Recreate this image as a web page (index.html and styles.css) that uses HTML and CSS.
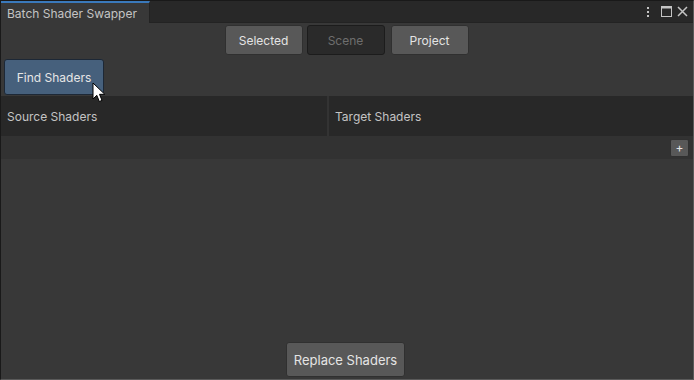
FILE: index.html
```html
<!DOCTYPE html>
<html lang="en">
  <head>
    <meta charset="UTF-8" />
    <title>Batch Shader Swapper</title>
    <link rel="stylesheet" href="styles.css">
  </head>
  <body>
    <div class="window">
      <div class="tabbar">
        <div class="tab">Batch Shader Swapper</div>
        <div class="tabicons">
          <svg class="kebab" width="4" height="12" viewBox="0 0 4 12">
            <rect x="1" y="1" width="2" height="2" fill="#c4c4c4" />
            <rect x="1" y="5" width="2" height="2" fill="#c4c4c4" />
            <rect x="1" y="9" width="2" height="2" fill="#c4c4c4" />
          </svg>
          <svg class="maxi" width="11" height="11" viewBox="0 0 11 11">
            <rect x="0.5" y="0.5" width="10" height="10" fill="none" stroke="#c4c4c4" />
            <rect x="0.5" y="0.5" width="10" height="2" fill="#c4c4c4" />
          </svg>
          <svg width="11" height="11" viewBox="0 0 11 11">
            <path d="M1 1 L10 10 M10 1 L1 10" stroke="#c4c4c4" stroke-width="1.5" />
          </svg>
        </div>
      </div>

      <div class="content">
        <div class="toolbar">
          <button class="Button">Selected</button>
          <button class="Button active">Scene</button>
          <button class="Button gap">Project</button>
        </div>

        <div class="findrow">
          <button class="Button blue">Find Shaders</button>
          <svg class="cursor" width="15" height="21" viewBox="0 0 15 21">
            <path d="M1 1 L1 17 L4.8 13.3 L7.3 19.5 L10 18.4 L7.5 12.3 L12.8 12.3 Z" fill="#ffffff" stroke="#000000" stroke-width="1" stroke-linejoin="round" />
          </svg>
        </div>

        <div class="header">
          <div class="col">Source Shaders</div>
          <div class="divider"></div>
          <div class="col">Target Shaders</div>
        </div>
        <div class="addrow">
          <button class="plus">+</button>
        </div>
      </div>

      <div class="footer">
        <button class="Button replace">Replace Shaders</button>
      </div>
    </div>
  </body>
</html>
```

FILE: styles.css
```css
* {
  margin: 0;
  padding: 0;
  box-sizing: border-box;
  font-family: "Inter", "Noto Sans", sans-serif;
}
body {
  background: #191919;
}

.window {
  width: 694px;
  height: 380px;
  display: flex;
  flex-direction: column;
  background: #383838;
  border-top: 1px solid #191919;
  border-left: 1px solid #191919;
  border-right: 1px solid #5a5a5a;
  border-bottom: 1px solid #5a5a5a;
}

.tabbar {
  height: 22px;
  display: flex;
  align-items: stretch;
  justify-content: space-between;
  background: #282828;
  border-bottom: 1px solid #232323;
}
.tab {
  width: 149px;
  background: #383838;
  border-top: 2px solid #3a79bb;
  border-right: 1px solid #232323;
  color: #c4c4c4;
  font-size: 12px;
  padding: 3px 0 0 6px;
  margin-bottom: -1px;
}
.tabicons {
  display: flex;
  align-items: center;
  padding-right: 5px;
}
.kebab {
  margin-right: 11px;
}
.maxi {
  margin-right: 5px;
}

.toolbar {
  display: flex;
  justify-content: center;
  padding-top: 2px;
  padding-right: 1px;
}
.Button {
  height: 30px;
  width: 78px;
  background: #585858;
  color: #e4e4e4;
  border: 1px solid #303030;
  border-radius: 3px;
  font-size: 12px;
  margin-right: 4px;
}
.toolbar .Button:last-child {
  margin-right: 0;
}
.Button.gap {
  margin-left: 2px;
}
.Button.active {
  background: #2a2a2a;
  border-color: #1c1c1c;
  color: #6e6e6e;
}

.findrow {
  position: relative;
  padding: 4px 0 0 3px;
}
.Button.blue {
  width: 100px;
  height: 36px;
  background: #46607c;
  border-color: #1d2836;
  color: #e6e6e6;
}
.cursor {
  position: absolute;
  left: 91px;
  top: 27px;
}

.header {
  margin-top: 1px;
  height: 40px;
  display: flex;
  background: #282828;
}
.col {
  flex: 1;
  color: #c4c4c4;
  font-size: 12px;
  padding: 13px 0 0 6px;
}
.divider {
  width: 2px;
  background: #333333;
}
.header .col:first-child {
  flex: 0 0 326px;
}

.addrow {
  height: 23px;
  background: #323232;
  display: flex;
  justify-content: flex-end;
  align-items: center;
  padding-right: 4px;
}
.plus {
  width: 19px;
  height: 18px;
  background: #585858;
  border: 1px solid #303030;
  border-radius: 2px;
  color: #e4e4e4;
  font-size: 12px;
  line-height: 14px;
}

.content {
  flex: 1;
}
.footer {
  display: flex;
  justify-content: center;
  padding-bottom: 2px;
  padding-right: 3px;
}
.Button.replace {
  width: 119px;
  height: 35px;
  font-size: 13px;
  margin: 0;
}
```
